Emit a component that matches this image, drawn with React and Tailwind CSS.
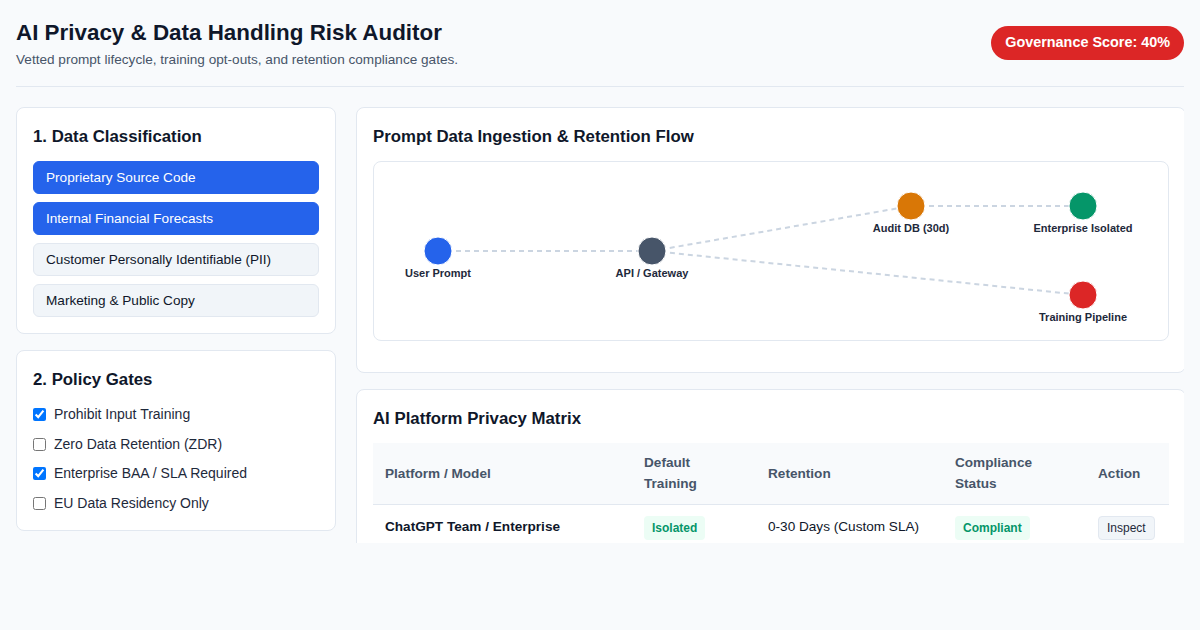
import React, { useState } from 'react';

const classes = [
  { label: 'Proprietary Source Code', on: true },
  { label: 'Internal Financial Forecasts', on: true },
  { label: 'Customer Personally Identifiable (PII)', on: false },
  { label: 'Marketing & Public Copy', on: false },
];

const gates = [
  { label: 'Prohibit Input Training', on: true },
  { label: 'Zero Data Retention (ZDR)', on: false },
  { label: 'Enterprise BAA / SLA Required', on: true },
  { label: 'EU Data Residency Only', on: false },
];

// node positions inside the flow canvas (794 x 180)
const nodes = [
  { id: 'user', x: 65, y: 90, color: '#2563eb', label: 'User Prompt' },
  { id: 'api', x: 279, y: 90, color: '#475569', label: 'API / Gateway' },
  { id: 'audit', x: 538, y: 45, color: '#d97706', label: 'Audit DB (30d)' },
  { id: 'ent', x: 710, y: 45, color: '#059669', label: 'Enterprise Isolated' },
  { id: 'train', x: 710, y: 134, color: '#dc2626', label: 'Training Pipeline' },
];

const edges = [
  ['user', 'api'],
  ['api', 'audit'],
  ['audit', 'ent'],
  ['api', 'train'],
];

function Card({ title, children, className = '' }) {
  return (
    <div className={`bg-white border border-[#e2e8f0] rounded-lg p-4 ${className}`}>
      <h3 className="text-[16.8px] font-bold text-[#0f172a] leading-[1.5] mb-3">{title}</h3>
      {children}
    </div>
  );
}

function FlowDiagram() {
  const byId = Object.fromEntries(nodes.map((n) => [n.id, n]));
  return (
    <div className="border border-[#e2e8f0] rounded-lg h-[180px] overflow-hidden">
      <svg width="794" height="180" viewBox="1 1 794 180" className="block">
        {edges.map(([a, b]) => (
          <line
            key={a + b}
            x1={byId[a].x}
            y1={byId[a].y}
            x2={byId[b].x}
            y2={byId[b].y}
            stroke="#cbd5e1"
            strokeWidth="2"
            strokeDasharray="5 4"
          />
        ))}
        {nodes.map((n) => (
          <g key={n.id}>
            <circle cx={n.x} cy={n.y} r="14" fill={n.color} stroke="#ffffff" strokeWidth="1" />
            <text
              x={n.x}
              y={n.y + 26}
              textAnchor="middle"
              fontSize="11"
              fontWeight="700"
              fill="#1e293b"
              fontFamily="Liberation Sans, Arial, sans-serif"
            >
              {n.label}
            </text>
          </g>
        ))}
      </svg>
    </div>
  );
}

const th = 'px-3 py-[10px] text-[13.6px] leading-[1.5] font-bold text-[#475569] align-middle';
const td = 'px-3 py-[10px] align-middle';

export default function App() {
  const [picked, setPicked] = useState(classes.map((c) => c.on));
  const [checks, setChecks] = useState(gates.map((g) => g.on));

  return (
    <div className="min-h-[630px] bg-[#f8fafc] p-4 font-['Liberation_Sans',Arial,sans-serif] text-[#0f172a]">
      <header className="flex items-center justify-between pb-4 border-b border-[#e2e8f0] mb-5">
        <div>
          <h1 className="text-[22.4px] font-bold leading-[1.5] text-[#0f172a]">AI Privacy &amp; Data Handling Risk Auditor</h1>
          <p className="text-[13.6px] text-[#475569] leading-[1.5]">
            Vetted prompt lifecycle, training opt-outs, and retention compliance gates.
          </p>
        </div>
        <div className="bg-[#dc2626] text-white text-[14.4px] font-bold rounded-full px-[14px] py-[6px] leading-[1.5]">
          Governance Score: 40%
        </div>
      </header>

      <div className="h-[436px] overflow-hidden">
        <div className="grid grid-cols-[320px_1fr] gap-x-5 items-start">
          <div className="flex flex-col gap-4">
            <Card title="1. Data Classification">
              <div className="flex flex-col gap-2">
                {classes.map((c, i) => (
                  <button
                    key={c.label}
                    onClick={() => setPicked(picked.map((p, j) => (j === i ? !p : p)))}
                    className={`text-left text-[13.6px] leading-[17px] px-3 py-[7px] rounded-md border ${
                      picked[i]
                        ? 'bg-[#2563eb] border-[#2563eb] text-white'
                        : 'bg-[#f1f5f9] border-[#e2e8f0] text-[#0f172a]'
                    }`}
                  >
                    {c.label}
                  </button>
                ))}
              </div>
            </Card>

            <Card title="2. Policy Gates">
              <div className="flex flex-col gap-[8.4px]">
                {gates.map((g, i) => (
                  <label key={g.label} className="flex items-center gap-2 text-sm leading-[1.5] text-[#1e293b]">
                    <input
                      type="checkbox"
                      checked={checks[i]}
                      onChange={() => setChecks(checks.map((c, j) => (j === i ? !c : c)))}
                      className="w-[13px] h-[13px] m-0"
                    />
                    {g.label}
                  </label>
                ))}
              </div>
            </Card>
          </div>

          <div className="flex flex-col gap-4">
            <Card title="Prompt Data Ingestion & Retention Flow" className="pb-[31px]">
              <FlowDiagram />
            </Card>

            <Card title="AI Platform Privacy Matrix">
              <table className="w-full border-collapse text-left">
                <thead>
                  <tr className="bg-[#f8fafc] border-b border-[#e2e8f0]">
                    <th className={`w-[259px] ${th}`}>Platform / Model</th>
                    <th className={`w-[124px] ${th}`}>Default Training</th>
                    <th className={`w-[187px] ${th}`}>Retention</th>
                    <th className={`w-[143px] ${th}`}>Compliance Status</th>
                    <th className={th}>Action</th>
                  </tr>
                </thead>
                <tbody>
                  <tr className="border-b border-[#e2e8f0]">
                    <td className={`${td} text-[13.6px] font-bold text-[#0f172a]`}>ChatGPT Team / Enterprise</td>
                    <td className={td}>
                      <span className="inline-block bg-[#ecfdf5] text-[#059669] text-xs font-bold leading-4 px-2 py-1 rounded">Isolated</span>
                    </td>
                    <td className={`${td} text-[13.6px] text-[#0f172a]`}>0-30 Days (Custom SLA)</td>
                    <td className={td}>
                      <span className="inline-block bg-[#ecfdf5] text-[#059669] text-xs font-bold leading-4 px-2 py-1 rounded">Compliant</span>
                    </td>
                    <td className={td}>
                      <button className="bg-[#f1f5f9] border border-[#e2e8f0] rounded text-xs leading-4 px-2 py-[3px] text-[#1e293b]">Inspect</button>
                    </td>
                  </tr>
                </tbody>
              </table>
            </Card>
          </div>
        </div>
      </div>
    </div>
  );
}
